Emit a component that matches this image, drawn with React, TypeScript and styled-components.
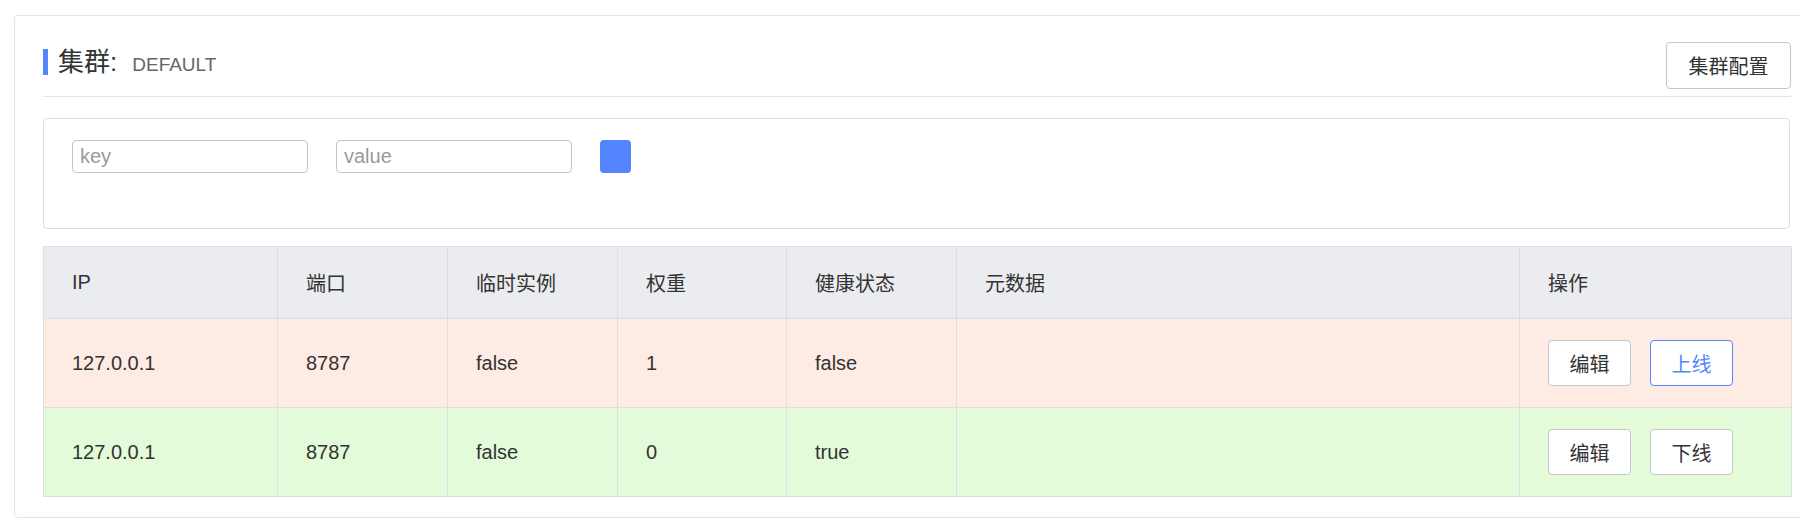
import React from "react";
import styled, { createGlobalStyle } from "styled-components";

const GlobalStyle = createGlobalStyle`
  html, body {
    margin: 0;
    padding: 0;
    background: #ffffff;
    overflow: hidden;
  }
  body {
    font-family: "Liberation Sans", "Noto Sans CJK SC", sans-serif;
    color: #333333;
  }
  * { box-sizing: border-box; }
`;

const FONT = `"Liberation Sans", "Noto Sans CJK SC", sans-serif`;
const PRIMARY = "#5584ff";

const Card = styled.div`
  margin: 15px 0 0 14px;
  width: 1806px;
  border: 1px solid #e3e4e8;
  border-radius: 4px;
  padding: 26px 28px 20px 28px;
`;

const Header = styled.div`
  width: 1748px;
  display: flex;
  justify-content: space-between;
  align-items: flex-start;
  padding-bottom: 7px;
  border-bottom: 1px solid #e3e4e8;
`;

const Title = styled.div`
  display: flex;
  align-items: center;
  margin-top: 7px;
  height: 26px;
`;

const TitleBar = styled.span`
  width: 5px;
  height: 26px;
  background: ${PRIMARY};
  margin-right: 10px;
`;

const TitleMain = styled.span`
  font-family: ${FONT};
  font-size: 26px;
  line-height: 26px;
  color: #333333;
`;

const TitleSub = styled.span`
  font-family: ${FONT};
  font-size: 19px;
  color: #666666;
  margin-left: 15px;
  position: relative;
  top: 3px;
`;

const Button = styled.button<{ $primary?: boolean; $w: number; $h: number }>`
  font-family: ${FONT};
  font-size: 20px;
  width: ${(p) => p.$w}px;
  height: ${(p) => p.$h}px;
  padding: 0;
  background: #ffffff;
  border: 1px solid ${(p) => (p.$primary ? PRIMARY : "#c4c6cf")};
  color: ${(p) => (p.$primary ? PRIMARY : "#333333")};
  border-radius: 4px;
  cursor: pointer;
  display: inline-flex;
  align-items: center;
  justify-content: center;
`;

const SearchPanel = styled.div`
  width: 1747px;
  margin-top: 21px;
  height: 111px;
  border: 1px solid #dcdee3;
  border-radius: 4px;
  padding: 21px 28px 0 28px;
  display: flex;
  align-items: flex-start;
  gap: 28px;
`;

const Input = styled.input`
  width: 236px;
  height: 33px;
  border: 1px solid #c4c6cf;
  border-radius: 4px;
  padding: 0 7px;
  font-family: ${FONT};
  font-size: 20px;
  color: #333;
  outline: none;
  &::placeholder { color: #999999; }
`;

const SearchButton = styled.button`
  width: 31px;
  height: 33px;
  border: none;
  border-radius: 4px;
  background: ${PRIMARY};
  padding: 0;
  cursor: pointer;
`;

const Table = styled.table`
  margin-top: 17px;
  width: 1748px;
  border-collapse: collapse;
  table-layout: fixed;
  border: 1px solid #dcdee3;
`;

const Th = styled.th`
  background: #ebecf0;
  height: 72px;
  padding: 0 0 0 28px;
  text-align: left;
  font-weight: normal;
  font-family: ${FONT};
  font-size: 20px;
  color: #333333;
  border: 1px solid #dcdee3;
`;

const Tr = styled.tr<{ $bg: string }>`
  background: ${(p) => p.$bg};
`;

const Td = styled.td`
  height: 89px;
  padding: 0 0 0 28px;
  font-family: ${FONT};
  font-size: 20px;
  color: #333333;
  border: 1px solid #dcdee3;
`;

const Actions = styled.div`
  display: flex;
  gap: 19px;
`;

const columns = [
  { title: "IP", w: 234 },
  { title: "端口", w: 170 },
  { title: "临时实例", w: 170 },
  { title: "权重", w: 169 },
  { title: "健康状态", w: 170 },
  { title: "元数据", w: 563 },
  { title: "操作", w: 272 },
];

const rows = [
  { ip: "127.0.0.1", port: "8787", eph: "false", weight: "1", healthy: "false", bg: "#feebe4", action: "上线", primary: true },
  { ip: "127.0.0.1", port: "8787", eph: "false", weight: "0", healthy: "true", bg: "#e3fbd9", action: "下线", primary: false },
];

export default function App() {
  return (
    <>
      <GlobalStyle />
      <Card>
        <Header>
          <Title>
            <TitleBar />
            <TitleMain>集群:</TitleMain>
            <TitleSub>DEFAULT</TitleSub>
          </Title>
          <Button $w={125} $h={47}>集群配置</Button>
        </Header>
        <SearchPanel>
          <Input placeholder="key" />
          <Input placeholder="value" />
          <SearchButton />
        </SearchPanel>
        <Table>
          <colgroup>
            {columns.map((c) => (
              <col key={c.title} style={{ width: c.w }} />
            ))}
          </colgroup>
          <thead>
            <tr>
              {columns.map((c) => (
                <Th key={c.title}>{c.title}</Th>
              ))}
            </tr>
          </thead>
          <tbody>
            {rows.map((r, i) => (
              <Tr key={i} $bg={r.bg}>
                <Td>{r.ip}</Td>
                <Td>{r.port}</Td>
                <Td>{r.eph}</Td>
                <Td>{r.weight}</Td>
                <Td>{r.healthy}</Td>
                <Td />
                <Td>
                  <Actions>
                    <Button $w={83} $h={46}>编辑</Button>
                    <Button $w={83} $h={46} $primary={r.primary}>{r.action}</Button>
                  </Actions>
                </Td>
              </Tr>
            ))}
          </tbody>
        </Table>
      </Card>
    </>
  );
}
